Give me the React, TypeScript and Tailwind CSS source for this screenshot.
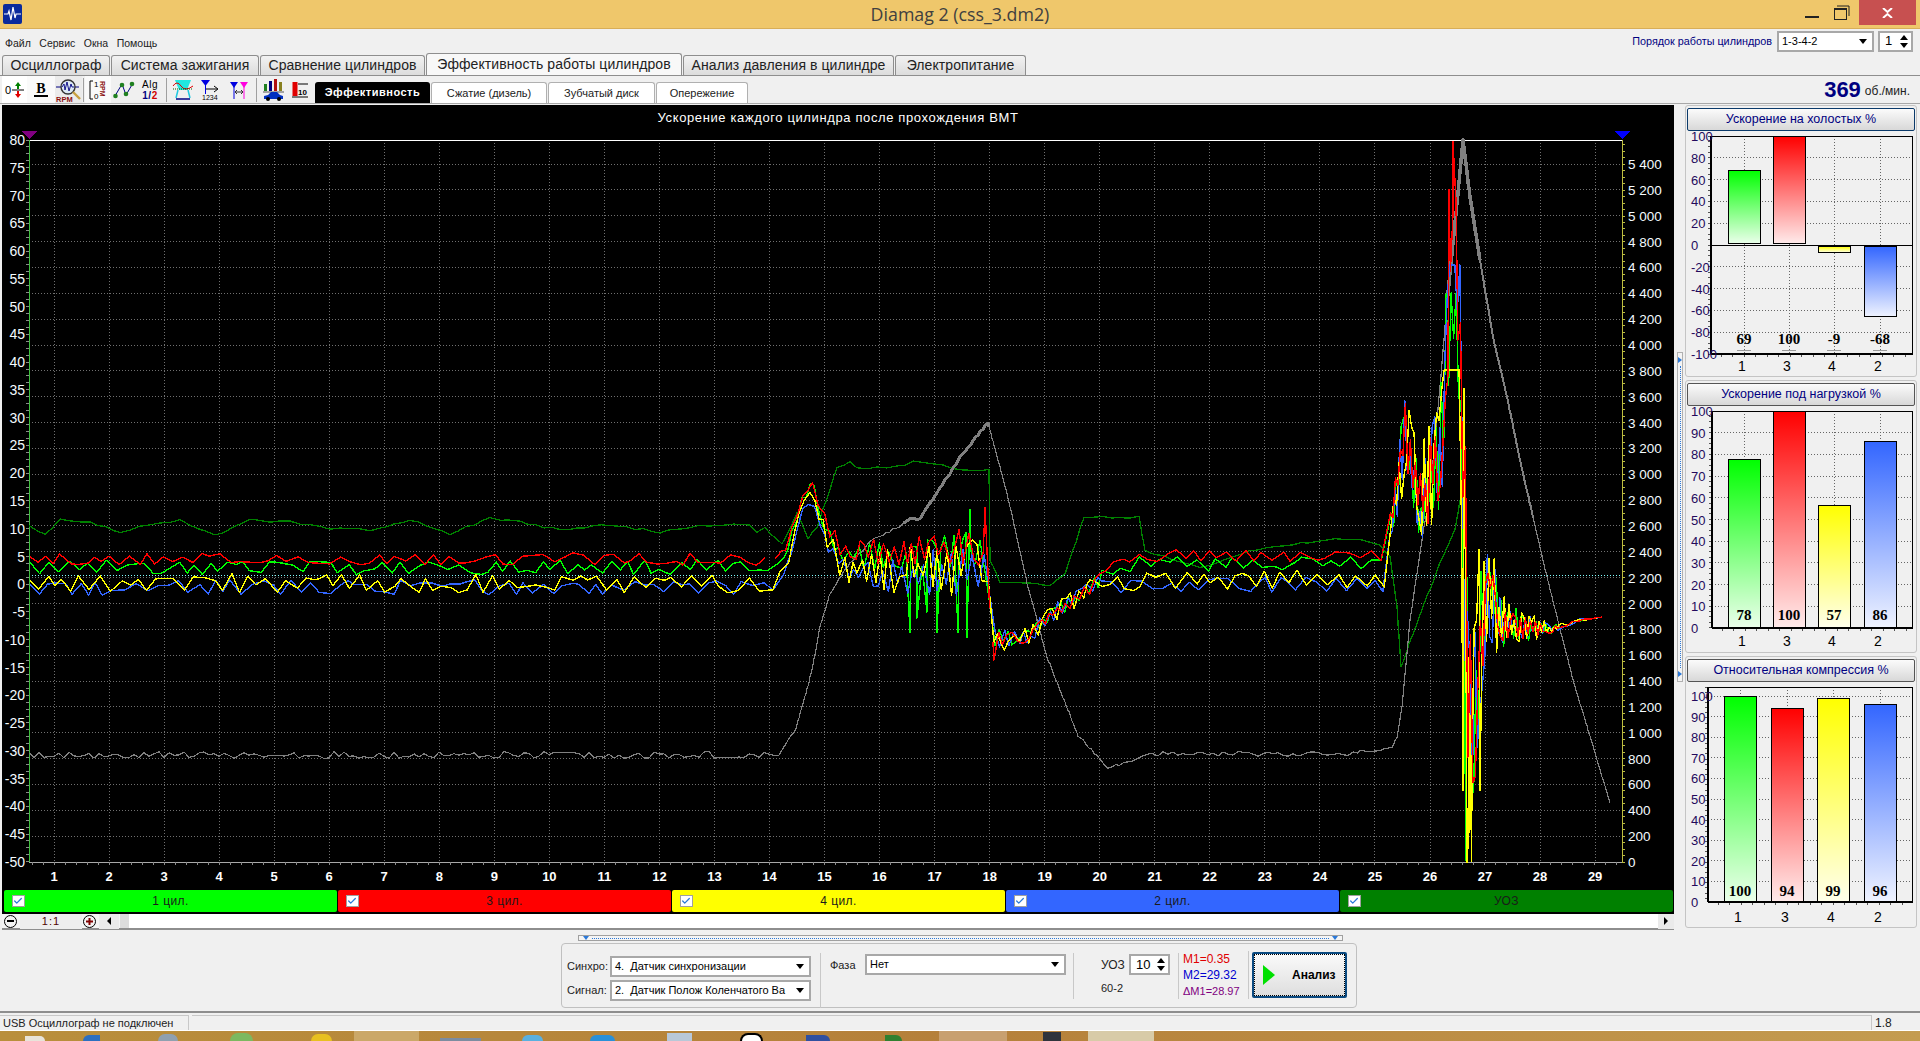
import { Check } from 'lucide-react';

type Pt = [number, number];

function rng(seed: number) {
  let a = seed;
  return () => {
    a = (a + 0x6d2b79f5) | 0;
    let t = Math.imul(a ^ (a >>> 15), 1 | a);
    t = (t + Math.imul(t ^ (t >>> 7), 61 | t)) ^ t;
    return ((t ^ (t >>> 14)) >>> 0) / 4294967296;
  };
}

function interp(pts: Pt[], x: number) {
  if (x <= pts[0][0]) return pts[0][1];
  for (let i = 1; i < pts.length; i++) {
    if (x <= pts[i][0]) {
      const [x0, y0] = pts[i - 1];
      const [x1, y1] = pts[i];
      return y0 + ((y1 - y0) * (x - x0)) / (x1 - x0);
    }
  }
  return pts[pts.length - 1][1];
}

const toPath = (pts: Pt[]) => pts.map((p, i) => `${i ? 'L' : 'M'}${p[0].toFixed(1)} ${p[1].toFixed(1)}`).join(' ');

// break a polyline into short pieces with a little noise so it looks measured
function jitter(pts: Pt[], step: number, noise: number, seed: number) {
  const r = rng(seed);
  const out: Pt[] = [];
  for (let i = 1; i < pts.length; i++) {
    const [x0, y0] = pts[i - 1];
    const [x1, y1] = pts[i];
    const n = Math.max(1, Math.round(Math.hypot(x1 - x0, y1 - y0) / step));
    for (let k = 0; k < n; k++) {
      const t = k / n;
      out.push([x0 + (x1 - x0) * t, y0 + (y1 - y0) * t + (r() - 0.5) * 2 * noise]);
    }
  }
  out.push(pts[pts.length - 1]);
  return out;
}

const center: Pt[] = [[30, 575], [770, 575], [785, 565], [800, 510], [812, 490], [825, 530], [840, 560], [870, 565], [985, 560], [990, 620], [995, 640], [1030, 635], [1050, 615], [1075, 600], [1100, 580], [1140, 572], [1385, 572], [1392, 520], [1405, 430], [1415, 490], [1425, 500], [1440, 450], [1450, 300], [1456, 240], [1462, 400], [1468, 700], [1472, 760], [1480, 640], [1490, 600], [1505, 625], [1550, 630], [1580, 620], [1603, 617]];
const amp: Pt[] = [[30, 9], [770, 9], [790, 5], [850, 15], [900, 22], [985, 30], [995, 12], [1030, 10], [1060, 10], [1100, 9], [1385, 9], [1400, 40], [1440, 70], [1456, 130], [1465, 180], [1480, 90], [1500, 30], [1540, 9], [1560, 3], [1603, 0]];
const fade: Pt[] = [[30, 1], [780, 1], [800, 0.4], [850, 0.8], [985, 0.8], [990, 0], [1090, 0], [1130, 1], [1385, 1], [1400, 0.3], [1500, 0]];

function series(seed: number, off: number, mult: number, peakTop: number, spikes: Pt[]) {
  const r = rng(seed);
  const pts: Pt[] = [];
  let x = 30;
  let i = 0;
  while (x <= 1603) {
    const sign = r() < 0.82 ? (i % 2 ? 1 : -1) : i % 2 ? -1 : 1;
    const n = sign * (0.2 + 0.8 * r()) * mult;
    let y = interp(center, x) + off * interp(fade, x) + n * interp(amp, x);
    if (x > 1430 && x < 1464) y = Math.max(y, peakTop);
    pts.push([x, Math.max(141, Math.min(861, y))]);
    let step = 2.5;
    if (x < 780 || (x >= 1100 && x < 1385)) step = 6 + r() * 6;
    else if (x < 985) step = 3.5 + r() * 3;
    else if (x < 1100) step = 3 + r() * 3;
    else if (x >= 1560) step = 6;
    x += step;
    i++;
  }
  return [...pts, ...spikes].sort((a, b) => a[0] - b[0]);
}

const greenLine = series(11, -8, 0.85, 293, [[910, 632], [917, 618], [927, 612], [937, 632], [958, 632], [967, 637], [970, 510], [1466, 860], [1470, 800]]);
const redLine = series(29, -16, 0.7, 190, [[985, 508], [994, 660], [1449, 190], [1453, 142], [1456, 200]]);
const yellowLine = series(47, 8, 1.1, 370, [[1463, 790], [1467, 862], [1469, 830], [1472, 770], [1480, 790]]);
const blueLine = series(83, 13, 0.9, 265, [[1450, 265], [1474, 640]]);

const uozLine: Pt[] = jitter(
  [[29, 525], [45, 535], [60, 520], [90, 522], [120, 532], [150, 525], [180, 520], [215, 536], [250, 520], [290, 522], [330, 528], [370, 530], [410, 520], [450, 534], [490, 518], [520, 522], [560, 530], [610, 525], [660, 532], [700, 525], [750, 525], [757, 533], [765, 528], [782, 545], [797, 513], [808, 538], [817, 527], [837, 468], [850, 463], [857, 468], [897, 467], [913, 462], [933, 463], [963, 471], [989, 470], [990, 560], [1000, 583], [1027, 582], [1050, 585], [1065, 575], [1084, 517], [1139, 517], [1145, 551], [1200, 568], [1249, 551], [1335, 539], [1360, 540], [1380, 545], [1390, 557], [1397, 607], [1401, 667], [1418, 620], [1440, 563], [1455, 530], [1460, 500]],
  9, 1.2, 5,
);

const rpmLine: Pt[] = (() => {
  const r = rng(9);
  const flat: Pt[] = [];
  for (let x = 29; x < 780; x += 5) flat.push([x, 755 + (r() - 0.5) * 7]);
  const rest = jitter([[784, 747], [796, 728], [808, 686], [812, 670], [820, 627], [830, 593], [850, 563], [873, 540], [910, 520], [920, 518], [937, 493], [963, 453], [988, 423], [1007, 493], [1027, 583], [1047, 657], [1078, 735], [1108, 768], [1127, 762], [1151, 753]], 4, 1.3, 21);
  const flat2: Pt[] = [];
  for (let x = 1158; x < 1360; x += 5) flat2.push([x, 754 + (r() - 0.5) * 5]);
  const tail = jitter([[1360, 750], [1373, 752], [1392, 747], [1397, 737], [1402, 707], [1410, 620], [1423, 533], [1430, 493], [1440, 387], [1447, 303], [1457, 203], [1463, 140], [1470, 197], [1480, 260], [1493, 337], [1507, 397], [1520, 460], [1533, 517], [1547, 577], [1573, 680], [1610, 803]], 4, 0.8, 33);
  return [...flat, ...rest, ...flat2, ...tail];
})();

const rpmPart = (a: number, b: number) => rpmLine.filter(p => p[0] >= a && p[0] <= b);

const xAt = (k: number) => 54 + 55.04 * (k - 1);
const leftVals = Array.from({ length: 27 }, (_, i) => 80 - i * 5);
const rightVals = Array.from({ length: 28 }, (_, i) => i * 200);
const rightY = (v: number) => 862 - (v / 200) * 25.85;
const fmtRpm = (v: number) => (v >= 1000 ? `${Math.floor(v / 1000)} ${String(v % 1000).padStart(3, '0')}` : String(v));

function MainChart() {
  return (
    <svg width="1672" height="785" viewBox="2 105 1672 785" className="block" shapeRendering="crispEdges">
      <text x="838" y="122" textAnchor="middle" fill="#fff" fontSize="13" letterSpacing="0.62">Ускорение каждого цилиндра после прохождения ВМТ</text>
      {rightVals.slice(1).map(v => (
        <line key={v} x1="29" x2="1622" y1={rightY(v)} y2={rightY(v)} stroke="#707070" strokeDasharray="1 2" />
      ))}
      {Array.from({ length: 29 }, (_, i) => (
        <line key={i} x1={xAt(i + 1)} x2={xAt(i + 1)} y1="140" y2="862" stroke="#707070" strokeDasharray="1 2" />
      ))}
      <line x1="29" x2="1622" y1="575.5" y2="575.5" stroke="#7fffff" strokeDasharray="1 2" />
      <line x1="29" x2="1622" y1="140.5" y2="140.5" stroke="#fff" />
      <line x1="29" x2="1622" y1="862.5" y2="862.5" stroke="#a8a8a8" />
      <line x1="29.5" x2="29.5" y1="140" y2="862" stroke="#3fbf3f" />
      <line x1="1622.5" x2="1622.5" y1="140" y2="862" stroke="#bcbc40" />
      {Array.from({ length: 105 }, (_, i) => (
        <line key={i} x1="26" x2="29" y1={140 + i * 6.94} y2={140 + i * 6.94} stroke="#8a8a8a" />
      ))}
      {Array.from({ length: 112 }, (_, i) => (
        <line key={i} x1="1622" x2="1625" y1={862 - i * 6.46} y2={862 - i * 6.46} stroke="#bcbc40" />
      ))}
      {Array.from({ length: 145 }, (_, i) => (
        <line key={i} x1={32 + i * 11} x2={32 + i * 11} y1="862" y2="865" stroke="#8a8a8a" />
      ))}
      <polygon points="21,131 37,131 29,139" fill="#800080" />
      <polygon points="1614,131 1630,131 1622,139" fill="#0000ff" />
      {leftVals.map(v => (
        <text key={v} x="25" y={140 + (80 - v) * 5.554 + 5} textAnchor="end" fill="#f4fbff" fontSize="14">{v}</text>
      ))}
      {rightVals.map(v => (
        <text key={v} x={1628} y={rightY(v) + 5} fill="#f4fbff" fontSize="13.5">{fmtRpm(v)}</text>
      ))}
      {Array.from({ length: 29 }, (_, i) => (
        <text key={i} x={xAt(i + 1)} y="881" textAnchor="middle" fill="#fff" fontSize="13" fontWeight="700">{i + 1}</text>
      ))}
      <g fill="none" strokeLinejoin="round">
        <path d={toPath(uozLine)} stroke="#008000" strokeWidth="1.3" />
        <path d={toPath(rpmLine)} stroke="#808080" strokeWidth="1.2" />
        <path d={toPath(rpmPart(900, 990))} stroke="#808080" strokeWidth="3" />
        <path d={toPath(rpmPart(1447, 1480))} stroke="#808080" strokeWidth="3.5" />
        <path d={toPath(rpmPart(1480, 1533))} stroke="#808080" strokeWidth="2" />
        <path d={toPath(greenLine)} stroke="#00ff00" strokeWidth="1.4" />
        <path d={toPath(blueLine)} stroke="#3366ff" strokeWidth="1.4" />
        <path d={toPath(yellowLine)} stroke="#ffff00" strokeWidth="1.4" />
        <path d={toPath(redLine.filter(p => p[0] > 770 && p[0] < 990))} stroke="#ff0000" strokeWidth="1.4" />
        <path d={toPath(redLine.filter(p => p[0] <= 770))} stroke="#ff0000" strokeWidth="1.4" />
        <path d={toPath(redLine.filter(p => p[0] >= 990))} stroke="#ff0000" strokeWidth="1.4" />
      </g>
    </svg>
  );
}

type BarSpec = { x: number; top: number; bottom: number; color: string; label: string; name: string };

type ChartSpec = {
  id: string;
  left: number;
  top: number;
  bottom: number;
  ticks: { v: number; y: number }[];
  minor: number;
  zeroY?: number;
  labelY: number;
  nameY: number;
  underline?: boolean;
  bars: BarSpec[];
};

function BarChart({ spec, offsetY, h }: { spec: ChartSpec; offsetY: number; h: number }) {
  const right = 1912;
  const minorTicks: number[] = [];
  for (let y = spec.top; y <= spec.bottom; y += spec.minor) minorTicks.push(y);
  const xTicks: number[] = [];
  for (let x = spec.left + 10; x < right; x += 11.5) xTicks.push(x);
  return (
    <svg width="230" height={h} viewBox={`1686 ${offsetY} 230 ${h}`} className="block overflow-visible" shapeRendering="crispEdges">
      <defs>
        {spec.bars.map(b => (
          <linearGradient key={b.name} id={`${spec.id}-${b.name}`} x1="0" y1="0" x2="0" y2="1">
            <stop offset="0" stopColor={b.color} />
            <stop offset="1" stopColor={b.color} stopOpacity="0.08" />
          </linearGradient>
        ))}
      </defs>
      {spec.ticks.map(t => (
        <line key={t.v} x1={spec.left} x2={right} y1={t.y} y2={t.y} stroke="#666" strokeDasharray="1 2" />
      ))}
      {spec.bars.map(b => (
        <line key={b.name} x1={b.x + 16} x2={b.x + 16} y1={spec.top} y2={spec.bottom} stroke="#666" strokeDasharray="1 2" />
      ))}
      {minorTicks.map(y => (
        <line key={y} x1={spec.left - 3} x2={spec.left} y1={y} y2={y} stroke="#555" />
      ))}
      {xTicks.map(x => (
        <line key={x} x1={x} x2={x} y1={spec.bottom} y2={spec.bottom + 3} stroke="#555" />
      ))}
      {spec.bars.map(b => (
        <g key={b.name}>
          <rect x={b.x + 0.5} y={b.top + 0.5} width="32" height={b.bottom - b.top - 1} fill="#fff" stroke="none" />
          <rect x={b.x + 0.5} y={b.top + 0.5} width="32" height={b.bottom - b.top - 1} fill={`url(#${spec.id}-${b.name})`} stroke="#000" />
        </g>
      ))}
      <rect x={spec.left} y={spec.top} width={right - spec.left} height={spec.bottom - spec.top} fill="none" stroke="#000" />
      <line x1={spec.left} x2={spec.left} y1={spec.top} y2={spec.bottom} stroke="#000" strokeWidth="2" />
      <line x1={spec.left} x2={right} y1={spec.bottom} y2={spec.bottom} stroke="#000" strokeWidth="2" />
      {spec.zeroY !== undefined && <line x1={spec.left} x2={right} y1={spec.zeroY} y2={spec.zeroY} stroke="#000" />}
      {spec.ticks.map(t => (
        <text key={t.v} x="1691" y={t.y + 5} fontSize="13" fill="#240a5c">{t.v}</text>
      ))}
      {spec.bars.map(b => (
        <text key={b.name} x={b.x + 16} y={spec.labelY} textAnchor="middle" fontSize="15" fontWeight="700" fontFamily="Liberation Serif" fill="#000">{b.label}</text>
      ))}
      {spec.underline && spec.bars.map(b => (
        <line key={b.name} x1={b.x + 9} x2={b.x + 23} y1={spec.labelY + 6} y2={spec.labelY + 6} stroke="#999" />
      ))}
      {spec.bars.map(b => (
        <text key={b.name} x={b.x + 14} y={spec.nameY} textAnchor="middle" fontSize="14" fill="#000">{b.name}</text>
      ))}
    </svg>
  );
}

const barColors = { g: '#00ff00', r: '#ff0000', y: '#ffff00', b: '#3366ff' };

const chart1: ChartSpec = {
  id: 'idle', left: 1711, top: 137, bottom: 355, zeroY: 246, minor: 5.45, labelY: 345, nameY: 372, underline: true,
  ticks: [100, 80, 60, 40, 20, 0, -20, -40, -60, -80, -100].map((v, i) => ({ v, y: 137 + i * 21.8 })),
  bars: [
    { x: 1728, top: 171, bottom: 245, color: barColors.g, label: '69', name: '1' },
    { x: 1773, top: 137, bottom: 245, color: barColors.r, label: '100', name: '3' },
    { x: 1818, top: 247, bottom: 254, color: barColors.y, label: '-9', name: '4' },
    { x: 1864, top: 247, bottom: 318, color: barColors.b, label: '-68', name: '2' },
  ],
};

const chart2: ChartSpec = {
  id: 'load', left: 1712, top: 412, bottom: 629, minor: 5.42, labelY: 621, nameY: 647,
  ticks: [100, 90, 80, 70, 60, 50, 40, 30, 20, 10, 0].map((v, i) => ({ v, y: 412 + i * 21.7 })),
  bars: [
    { x: 1728, top: 460, bottom: 629, color: barColors.g, label: '78', name: '1' },
    { x: 1773, top: 412, bottom: 629, color: barColors.r, label: '100', name: '3' },
    { x: 1818, top: 506, bottom: 629, color: barColors.y, label: '57', name: '4' },
    { x: 1864, top: 442, bottom: 629, color: barColors.b, label: '86', name: '2' },
  ],
};

const chart3: ChartSpec = {
  id: 'comp', left: 1708, top: 687, bottom: 902, minor: 5.15, labelY: 896, nameY: 922,
  ticks: [100, 90, 80, 70, 60, 50, 40, 30, 20, 10, 0].map((v, i) => ({ v, y: 696 + i * 20.6 })),
  bars: [
    { x: 1724, top: 696, bottom: 902, color: barColors.g, label: '100', name: '1' },
    { x: 1771, top: 708, bottom: 902, color: barColors.r, label: '94', name: '3' },
    { x: 1817, top: 698, bottom: 902, color: barColors.y, label: '99', name: '4' },
    { x: 1864, top: 704, bottom: 902, color: barColors.b, label: '96', name: '2' },
  ],
};

function ChartCard({ title, focus, children, className }: { title: string; focus?: boolean; children: React.ReactNode; className: string }) {
  return (
    <div className={`flex flex-col items-center rounded-[3px] border border-[#c4c4c4] pt-[2px] ${className}`}>
      <div className={`flex h-[23px] w-[228px] items-center justify-center rounded-[2px] border bg-gradient-to-b from-[#fbfbfb] to-[#d8d8d8] text-[12.5px] text-[#000080] ${focus ? 'border-[#0b3a6a]' : 'border-[#555]'}`}>
        {title}
      </div>
      {children}
    </div>
  );
}

function Dropdown({ text, className }: { text: string; className: string }) {
  return (
    <div className={`flex items-center justify-between border-2 border-[#a8a8a8] bg-white pl-[3px] pr-[5px] text-[11px] text-black ${className}`}>
      <span className="whitespace-pre">{text}</span>
      <span className="ml-1 h-0 w-0 shrink-0 border-x-[4px] border-t-[5px] border-x-transparent border-t-black" />
    </div>
  );
}

function Spin({ value, className }: { value: string; className: string }) {
  return (
    <div className={`flex items-center justify-between border-2 border-[#a8a8a8] bg-white pl-[5px] pr-[3px] text-[13px] text-black ${className}`}>
      <span>{value}</span>
      <span className="flex flex-col gap-[3px]">
        <span className="h-0 w-0 border-x-[4px] border-b-[5px] border-x-transparent border-b-black" />
        <span className="h-0 w-0 border-x-[4px] border-t-[5px] border-x-transparent border-t-black" />
      </span>
    </div>
  );
}

const tabs = [
  { label: 'Осциллограф', w: 'w-[108px]' },
  { label: 'Система зажигания', w: 'w-[148px]' },
  { label: 'Сравнение цилиндров', w: 'w-[165px]' },
  { label: 'Эффективность работы цилиндров', w: 'w-[256px]', active: true },
  { label: 'Анализ давления в цилиндре', w: 'w-[211px]' },
  { label: 'Электропитание', w: 'w-[131px]' },
];

const subTabs = [
  { label: 'Сжатие (дизель)', w: 'w-[116px]' },
  { label: 'Зубчатый диск', w: 'w-[107px]' },
  { label: 'Опережение', w: 'w-[92px]' },
];

const legend = [
  { label: '1 цил.', bg: 'bg-[#00ff00]' },
  { label: '3 цил.', bg: 'bg-[#ff0000]' },
  { label: '4 цил.', bg: 'bg-[#ffff00]' },
  { label: '2 цил.', bg: 'bg-[#3366ff]' },
  { label: 'УОЗ', bg: 'bg-[#008000]' },
];

// tops of the desktop taskbar icons that show under the window
const taskbar = [
  { key: 'a', cls: 'ml-[25px] w-[20px] h-[5px] rounded-tr-full bg-[#e8e4da]' },
  { key: 'b', cls: 'ml-[38px] w-[17px] h-[6px] rounded-tl-full bg-[#2c6fc0]' },
  { key: 'c', cls: 'ml-[58px] w-[20px] h-[7px] rounded-t-full bg-[#8fa0b0]' },
  { key: 'd', cls: 'ml-[52px] w-[23px] h-[8px] rounded-t-full bg-[#7cb860]' },
  { key: 'e', cls: 'ml-[58px] w-[21px] h-[7px] rounded-t-full bg-[#e8c020]' },
  { key: 'f', cls: 'ml-[22px] w-[65px] h-[10px] bg-[#cba868]' },
  { key: 'g', cls: 'ml-[21px] w-[41px] h-[3px] bg-[#7c8ca0]' },
  { key: 'h', cls: 'ml-[41px] w-[21px] h-[6px] rounded-t-full bg-[#5ab0e0]' },
  { key: 'i', cls: 'ml-[47px] w-[25px] h-[6px] rounded-t-full bg-[#2a90d8]' },
  { key: 'j', cls: 'ml-[52px] w-[25px] h-[8px] bg-[#b8c8d8]' },
  { key: 'k', cls: 'ml-[48px] w-[23px] h-[8px] rounded-t-full border-2 border-b-0 border-black bg-white' },
  { key: 'l', cls: 'ml-[43px] w-[24px] h-[6px] rounded-tr-full bg-[#3050a0]' },
  { key: 'm', cls: 'ml-[55px] w-[17px] h-[6px] rounded-tr-full bg-[#308030]' },
  { key: 'n', cls: 'ml-[37px] w-[68px] h-[10px] bg-[#c8a070]' },
  { key: 'o', cls: 'ml-[36px] w-[18px] h-[9px] bg-[#30343c]' },
  { key: 'p', cls: 'ml-[27px] w-[66px] h-[10px] bg-[#d8cba8]' },
];

function ToolIcons() {
  return (
    <div className="flex h-full items-center">
      <div className="flex h-[27px] w-[25px] items-center justify-center bg-white">
        <svg width="22" height="20" viewBox="0 0 22 20">
          <text x="1" y="14" fontSize="11" fill="#000">0</text>
          <line x1="8" x2="20" y1="10" y2="10" stroke="#000" />
          <path d="M14 2l3 4h-2v3h-2V6h-2z" fill="#008000" />
          <path d="M14 18l3-4h-2v-3h-2v3h-2z" fill="#e00000" />
        </svg>
      </div>
      <div className="flex h-[27px] w-[28px] items-center justify-center bg-[#fafafa]">
        <svg width="18" height="18" viewBox="0 0 18 18">
          <text x="9" y="12" textAnchor="middle" fontSize="14" fontWeight="700" fontFamily="Liberation Serif" fill="#000">B</text>
          <rect x="2" y="14" width="14" height="2" fill="#000" />
        </svg>
      </div>
      <div className="flex h-[27px] w-[27px] items-center justify-center bg-[#ebebeb]">
        <svg width="26" height="26" viewBox="0 0 26 26">
          <line x1="0" x2="23" y1="10" y2="10" stroke="#000080" />
          <circle cx="12" cy="10" r="7" fill="#dbe8f4" stroke="#333" strokeWidth="1.4" />
          <path d="M6 10l2-3 1 6 2-8 2 9 2-7 1 3 2 0" fill="none" stroke="#000080" strokeWidth="0.9" />
          <line x1="17" x2="24" y1="15" y2="22" stroke="#c8a040" strokeWidth="2.4" />
          <text x="0" y="25" fontSize="7.5" fontWeight="700" fill="#8b1010">RPM</text>
        </svg>
      </div>
      <div className="mx-[1px] h-[24px] w-[1px] bg-[#a0a0a0]" />
      <div className="flex h-[27px] w-[26px] items-center justify-center bg-[#fafafa]">
        <svg width="18" height="22" viewBox="0 0 18 22">
          <path d="M4 2H1v18h3" fill="none" stroke="#000" />
          <text x="5" y="8" fontSize="8" fill="#000">1</text>
          <text x="5" y="20" fontSize="8" fill="#000">0</text>
          <text x="0" y="0" fontSize="7" fontWeight="700" fill="#8b1010" transform="translate(11 2) rotate(90)">RPM</text>
        </svg>
      </div>
      <div className="flex w-[26px] justify-center">
        <svg width="22" height="18" viewBox="0 0 22 18">
          <path d="M2 15L9 3l4 11 7-12" fill="none" stroke="#000080" />
          <circle cx="2.5" cy="15" r="2.3" fill="#208020" />
          <circle cx="9" cy="4" r="2.3" fill="#208020" />
          <circle cx="13" cy="13" r="2.3" fill="#208020" />
          <circle cx="19" cy="3" r="2.3" fill="#208020" />
        </svg>
      </div>
      <div className="flex w-[26px] flex-col items-center text-[10px] leading-[11px] tracking-[0.5px]">
        <span className="text-black">Alg</span>
        <span className="font-bold"><span className="text-[#000080]">1/</span><span className="text-[#d00000]">2</span></span>
      </div>
      <div className="mx-[3px] h-[24px] w-[1px] bg-[#a0a0a0]" />
      <svg width="22" height="24" viewBox="0 0 22 24" className="ml-[2px]">
        <path d="M3 2h16l-4 10h-8z" fill="#20e8e0" />
        <path d="M1 8q4-6 8 0t12 0" fill="none" stroke="#e00000" />
        <path d="M1 11h20" stroke="#006000" strokeDasharray="1 1" />
        <path d="M6 12l-2 8M16 12l2 8" stroke="#20c8e0" strokeWidth="1.5" />
        <path d="M4 21h14" stroke="#000080" strokeWidth="1.5" />
      </svg>
      <svg width="20" height="22" viewBox="0 0 20 22" className="ml-[7px]">
        <polygon points="0,1 9,1 4.500,7" fill="#0000e0" />
        <line x1="4.500" x2="4.500" y1="4" y2="15" stroke="#0000e0" />
        <path d="M5 10h11M13 7l4 3-4 3" fill="none" stroke="#000" />
        <text x="1" y="21" fontSize="7" fill="#000">1234</text>
      </svg>
      <svg width="20" height="22" viewBox="0 0 20 22" className="ml-[8px]">
        <polygon points="1,3 9,3 5,9" fill="#0000e0" />
        <line x1="5" x2="5" y1="6" y2="20" stroke="#0000e0" />
        <polygon points="11,3 19,3 15,9" fill="#ff00e0" />
        <line x1="15" x2="15" y1="6" y2="20" stroke="#ff00e0" />
        <path d="M7 13h6M8 11l-2 2 2 2M12 11l2 2-2 2" fill="none" stroke="#000" strokeWidth="0.8" />
      </svg>
      <div className="ml-[7px] mr-[6px] h-[24px] w-[1px] bg-[#a0a0a0]" />
      <svg width="22" height="24" viewBox="0 0 22 24">
        <rect x="1" y="6" width="3" height="7" fill="#208020" />
        <rect x="6" y="3" width="3" height="10" fill="#000080" />
        <rect x="11" y="1" width="3" height="12" fill="#b01010" />
        <rect x="16" y="4" width="3" height="9" fill="#888020" />
        <line x1="0" x2="21" y1="14" y2="14" stroke="#555" />
        <path d="M1 21v-3l4-1 3-3h6l3 3 3 1v3z" fill="#0030c0" />
        <circle cx="5" cy="21" r="2" fill="#000" />
        <circle cx="16" cy="21" r="2" fill="#000" />
      </svg>
      <svg width="16" height="20" viewBox="0 0 16 20" className="ml-[7px]">
        <rect x="0.500" y="2" width="5" height="14" fill="#e00000" />
        <line x1="6" x2="16" y1="4" y2="4" stroke="#000" />
        <line x1="0" x2="16" y1="17" y2="17" stroke="#000" />
        <text x="6" y="15" fontSize="8" fontWeight="700" fill="#000">10</text>
      </svg>
    </div>
  );
}

export default function App() {
  return (
    <div className="flex h-[1041px] w-[1920px] flex-col overflow-hidden bg-[#f0f0f0] font-['Liberation_Sans',Arial,sans-serif] text-black">
      {/* window title */}
      <div className="grid h-[29px] shrink-0 grid-cols-[1fr_auto_1fr] border-b border-[#d8ae58] bg-[#efc76b]">
        <div className="pl-[3px] pt-[4px]">
          <svg width="19" height="20" viewBox="0 0 19 20">
            <rect width="19" height="20" rx="2" fill="#0a2a9c" />
            <path d="M1 10h4l1-3 2 9 2-13 2 11 1-4h5" fill="none" stroke="#fff" strokeWidth="1.2" />
          </svg>
        </div>
        <div className="flex items-center font-['Open_Sans'] text-[17.8px] text-[#404040]">Diamag 2 (css_3.dm2)</div>
        <div className="flex justify-end pr-[4px]">
          <div className="mr-[15px] mt-[16px] h-[2px] w-[14px] bg-[#222]" />
          <svg width="16" height="15" viewBox="0 0 16 15" className="mr-[9px] mt-[5px]">
            <rect x="0.500" y="3.500" width="12" height="11" fill="none" stroke="#222" />
            <rect x="0" y="3" width="13" height="2" fill="#222" />
            <path d="M3 1h12v10" fill="none" stroke="#222" />
          </svg>
          <div className="flex h-[25px] w-[57px] items-center justify-center bg-[#c75050]">
            <svg width="11" height="10" viewBox="0 0 11 10">
              <path d="M1 0l4.500 4L10 0M1 10l4.500-4L10 10" fill="none" stroke="#fff" strokeWidth="2" />
            </svg>
          </div>
        </div>
      </div>

      {/* menu */}
      <div className="flex h-[24px] shrink-0 items-center justify-between pl-[5px] pr-[7px]">
        <div className="flex gap-[8.5px] pt-[6px] text-[10.5px] text-[#222]">
          <span>Файл</span>
          <span>Сервис</span>
          <span>Окна</span>
          <span>Помощь</span>
        </div>
        <div className="flex items-center">
          <span className="mr-[5px] text-[10.8px] text-[#000080]">Порядок работы цилиндров</span>
          <Dropdown text="1-3-4-2" className="h-[21px] w-[97px]" />
          <Spin value="1" className="ml-[4px] h-[21px] w-[35px]" />
        </div>
      </div>

      {/* tabs */}
      <div className="flex h-[22px] shrink-0 items-end gap-[1px] pl-[2px]">
        {tabs.map(t => (
          <div
            key={t.label}
            className={`flex items-center justify-center rounded-t-[3px] border border-b-0 border-[#8e8e8e] text-[14px] tracking-[0.08px] text-[#222] ${t.w} ${t.active ? 'h-[22px] bg-[#f8f8f8]' : 'h-[20px] bg-gradient-to-b from-[#f2f2f2] to-[#dcdcdc]'}`}
          >
            {t.label}
          </div>
        ))}
      </div>

      {/* toolbar */}
      <div className="flex h-[29px] shrink-0 items-end justify-between border-y border-t-[#8e8e8e] border-b-[#a8a8a8] pl-[2px] pr-[10px]">
        <div className="flex h-full items-center">
          <ToolIcons />
          <div className="ml-[7px] mt-[6px] flex h-[21px] items-end">
            <div className="flex h-[21px] w-[115px] items-center justify-center rounded-t-[3px] bg-black text-[11px] font-bold tracking-[0.5px] text-white">Эффективность</div>
            {subTabs.map(t => (
              <div key={t.label} className={`ml-[1px] flex h-[21px] items-center justify-center rounded-t-[3px] border border-b-0 border-[#b0b0b0] bg-white text-[11px] text-[#222] ${t.w}`}>
                {t.label}
              </div>
            ))}
          </div>
        </div>
        <div className="flex h-full items-center">
          <span className="text-[22px] font-bold text-[#000080]">369</span>
          <span className="ml-[4px] mt-[3px] text-[12px] text-[#222]">об./мин.</span>
        </div>
      </div>

      {/* main */}
      <div className="flex h-[909px] shrink-0 border-b-2 border-[#8e8e8e]">
        <div className="flex w-[1676px] shrink-0 flex-col pl-[2px] pr-[2px] pt-[1px]">
          <div className="h-[809px] shrink-0 bg-black">
            <MainChart />
            <div className="flex h-[22px] gap-[1px] pl-[1.5px]">
              {legend.map(l => (
                <div key={l.label} className={`flex h-[22px] w-[333px] items-center rounded-[2px] pl-[8px] text-[12px] text-[#1a1a1a] ${l.bg}`}>
                  <span className="flex h-[12px] w-[13px] shrink-0 items-center justify-center border border-[#a0a0a0] bg-white">
                    <Check size={10} strokeWidth={3} className="text-[#2a78d8]" />
                  </span>
                  <span className="flex-1 pr-[20px] text-center tracking-[0.4px]">{l.label}</span>
                </div>
              ))}
            </div>
          </div>
          {/* zoom and scroll */}
          <div className="flex h-[16px] shrink-0 items-center border-b-2 border-[#8e8e8e] bg-[#f4f4f4]">
            <span className="ml-[2px] flex h-[13px] w-[13px] items-center justify-center rounded-full border border-black">
              <span className="h-[2px] w-[7px] bg-black" />
            </span>
            <span className="ml-[3px] flex h-[15px] w-[62px] items-center justify-center bg-[#eeeeee] text-[11px] tracking-[1px] text-[#500000]">1:1</span>
            <svg width="13" height="13" viewBox="0 0 13 13" className="ml-[1px]">
              <circle cx="6.500" cy="6.500" r="6" fill="none" stroke="#000" />
              <path d="M3 6.500h7M6.500 3v7" stroke="#800000" strokeWidth="2" />
            </svg>
            <span className="ml-[3px] flex h-[15px] w-[20px] items-center justify-center bg-[#eaeaea]">
              <span className="h-0 w-0 border-y-[4px] border-r-[4px] border-y-transparent border-r-black" />
            </span>
            <span className="ml-[1px] h-[14px] w-[9px] bg-[#dcdcdc]" />
            <span className="h-[14px] flex-1 bg-white" />
            <span className="flex h-[15px] w-[16px] items-center justify-center bg-[#eaeaea]">
              <span className="h-0 w-0 border-y-[4px] border-l-[4px] border-y-transparent border-l-black" />
            </span>
          </div>
          {/* bottom panel */}
          <div className="ml-[575.5px] mt-[5px] flex h-[6px] w-[765px] items-center justify-between border border-[#a0a0a0] bg-[#f4f4f4] px-[4px]">
            <span className="h-0 w-0 border-x-[3px] border-t-[4px] border-x-transparent border-t-[#2a78d8]" />
            <span className="mx-[3px] flex-1 border-t border-dotted border-[#2a78d8]" />
            <span className="h-0 w-0 border-x-[3px] border-t-[4px] border-x-transparent border-t-[#2a78d8]" />
          </div>
          <div className="ml-[559px] mt-[2px] flex h-[65px] w-[796px] rounded-[4px] border border-[#c0c0c0] text-[11px] text-[#222]">
            <div className="flex w-[258px] flex-col gap-[3px] pl-[5px] pt-[12px]">
              <div className="flex items-center">
                <span className="w-[43px]">Синхро:</span>
                <Dropdown text="4.  Датчик синхронизации" className="h-[21px] w-[201px]" />
              </div>
              <div className="flex items-center">
                <span className="w-[43px]">Сигнал:</span>
                <Dropdown text="2.  Датчик Полож Коленчатого Ва" className="h-[21px] w-[201px]" />
              </div>
            </div>
            <div className="mt-[9px] h-[55px] w-px bg-[#c8c8c8]" />
            <div className="flex w-[252px] items-start pl-[9px] pt-[10px]">
              <span className="w-[35px] pt-[3px]">Фаза</span>
              <Dropdown text="Нет" className="h-[21px] w-[201px]" />
            </div>
            <div className="mt-[9px] h-[46px] w-px bg-[#c8c8c8]" />
            <div className="flex w-[104px] flex-col pl-[27px] pt-[10px]">
              <div className="flex items-center">
                <span className="w-[28px] text-[12px]">УОЗ</span>
                <Spin value="10" className="h-[21px] w-[41px]" />
              </div>
              <span className="mt-[5px]">60-2</span>
            </div>
            <div className="mt-[9px] h-[46px] w-px bg-[#c8c8c8]" />
            <div className="flex w-[69px] flex-col gap-[3px] pl-[4px] pt-[9px] text-[12px] leading-[13px]">
              <span className="text-[#e00000]">M1=0.35</span>
              <span className="text-[#0000d0]">M2=29.32</span>
              <span className="text-[11px] text-[#800080]">ΔM1=28.97</span>
            </div>
            <div className="mt-[7px] h-[48px] w-px bg-[#c8c8c8]" />
            <div className="ml-[3px] mt-[8px] flex h-[46px] w-[95px] items-center rounded-[2px] border-2 border-[#0b4a80] bg-gradient-to-b from-[#fafafa] to-[#dedede] pl-[9px] outline-1 -outline-offset-3 outline-black outline-dotted">
              <span className="h-0 w-0 border-y-[10px] border-l-[12px] border-y-transparent border-l-[#00e000]" />
              <span className="ml-[17px] text-[12px] font-bold text-black">Анализ</span>
            </div>
          </div>
        </div>

        {/* vertical splitter */}
        <div className="ml-[1px] mt-[248px] flex h-[330px] w-[6px] shrink-0 flex-col items-center justify-between border border-[#b0b0b0] bg-[#f4f4f4] py-[4px]">
          <span className="h-0 w-0 border-y-[3px] border-l-[4px] border-y-transparent border-l-[#2a78d8]" />
          <span className="my-[3px] flex-1 border-l border-dotted border-[#2a78d8]" />
          <span className="h-0 w-0 border-y-[3px] border-l-[4px] border-y-transparent border-l-[#2a78d8]" />
        </div>

        {/* right charts */}
        <div className="ml-[2px] flex w-[232px] shrink-0 flex-col gap-[3px] pt-[1px]">
          <ChartCard title="Ускорение на холостых %" focus className="h-[272px]">
            <BarChart spec={chart1} offsetY={132} h={245} />
          </ChartCard>
          <ChartCard title="Ускорение под нагрузкой %" className="h-[273px]">
            <BarChart spec={chart2} offsetY={407} h={245} />
          </ChartCard>
          <ChartCard title="Относительная компрессия %" className="h-[272px]">
            <BarChart spec={chart3} offsetY={682} h={245} />
          </ChartCard>
        </div>
      </div>

      {/* status bar */}
      <div className="flex h-[18px] shrink-0 items-stretch border-b border-white pt-[2px] text-[11px] text-[#222]">
        <div className="flex w-[189px] items-center border-r border-t border-[#c8c8c8] pl-[3px]">USB Осциллограф не подключен</div>
        <div className="ml-[3px] w-[1680px] border-r border-t border-[#c8c8c8]" />
        <div className="flex flex-1 items-center pl-[3px] text-[12px]">1.8</div>
      </div>

      {/* taskbar strip */}
      <div className="flex h-[10px] shrink-0 items-end overflow-hidden bg-gradient-to-r from-[#b98f3c] via-[#b5803a] to-[#c49c50]">
        {taskbar.map(t => (
          <span key={t.key} className={`shrink-0 ${t.cls}`} />
        ))}
      </div>
    </div>
  );
}
